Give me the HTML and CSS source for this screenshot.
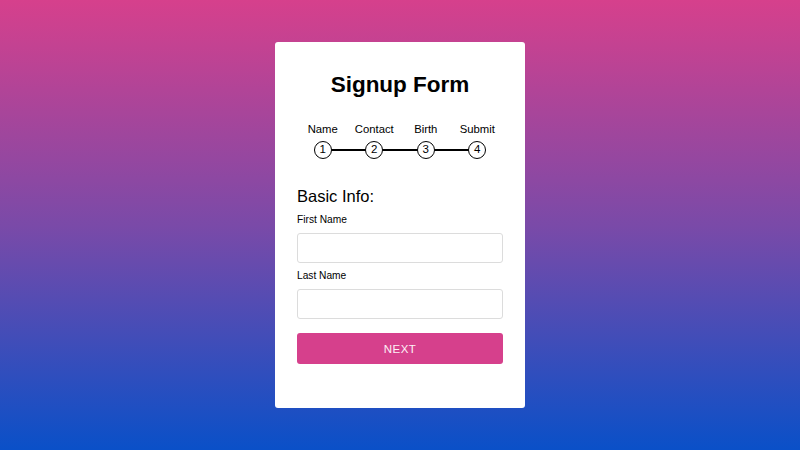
FILE: index.html
```html
<!DOCTYPE html>
<html>
<head>
<meta charset="utf-8">
<link rel="stylesheet" href="styles.css">
</head>
<body>
<div class="page">
  <div class="card">
    <h1 class="title">Signup Form</h1>
    <div class="steps">
      <div class="step"><span class="label">Name</span><span class="dot">1</span></div>
      <div class="step"><span class="label">Contact</span><span class="dot">2</span></div>
      <div class="step"><span class="label">Birth</span><span class="dot">3</span></div>
      <div class="step"><span class="label">Submit</span><span class="dot">4</span></div>
    </div>
    <form class="form">
      <div class="section">Basic Info:</div>
      <label class="field-label">First Name</label>
      <input class="input" type="text">
      <label class="field-label">Last Name</label>
      <input class="input" type="text">
      <button class="btn" type="button">NEXT</button>
    </form>
  </div>
</div>
</body>
</html>
```
FILE: styles.css
```css
* { box-sizing: border-box; }
html, body { margin: 0; padding: 0; }
body {
  font-family: "Liberation Sans", Arial, sans-serif;
  color: #000;
  background: linear-gradient(to bottom, #d6408c 0%, #7a4aa8 50%, #0a50c8 100%);
  width: 800px;
  height: 450px;
  overflow: hidden;
}
.page {
  height: 450px;
  display: flex;
  justify-content: center;
  padding-top: 42px;
}
.card {
  width: 250px;
  height: 366px;
  background: #fff;
  border-radius: 3px;
  padding: 30px 22px 0;
}
.title {
  margin: 0;
  font-size: 22.5px;
  line-height: 26px;
  font-weight: bold;
  text-align: center;
}
.steps {
  margin-top: 25px;
  display: flex;
  justify-content: center;
}
.step {
  width: 52px;
  display: flex;
  flex-direction: column;
  align-items: center;
  position: relative;
}
.label {
  font-size: 11.3px;
  line-height: 13px;
  white-space: nowrap;
}
.dot {
  position: relative;
  z-index: 1;
  margin-top: 5px;
  width: 18px;
  height: 18px;
  border: 1.5px solid #000;
  border-radius: 50%;
  font-size: 11.5px;
  line-height: 15px;
  text-align: center;
  background: #fff;
}
.step + .step::before {
  content: "";
  position: absolute;
  left: -18px;
  width: 36px;
  top: 26px;
  height: 2px;
  background: #000;
}
.form {
  margin-top: 28px;
  display: flex;
  flex-direction: column;
}
.section {
  font-size: 16.5px;
  line-height: 19px;
}
.field-label {
  font-size: 10.2px;
  line-height: 12px;
  margin-top: 8px;
}
.input {
  margin-top: 7px;
  height: 30px;
  width: 100%;
  border: 1px solid #dcdcdc;
  border-radius: 3px;
  background: #fff;
}
.input + .field-label { margin-top: 7px; }
.btn {
  margin-top: 14px;
  height: 31px;
  width: 100%;
  border: none;
  border-radius: 3px;
  background: #d6408c;
  color: #fdf0f6;
  font-family: "Liberation Sans", Arial, sans-serif;
  font-size: 11.5px;
  letter-spacing: 0.4px;
}
```
